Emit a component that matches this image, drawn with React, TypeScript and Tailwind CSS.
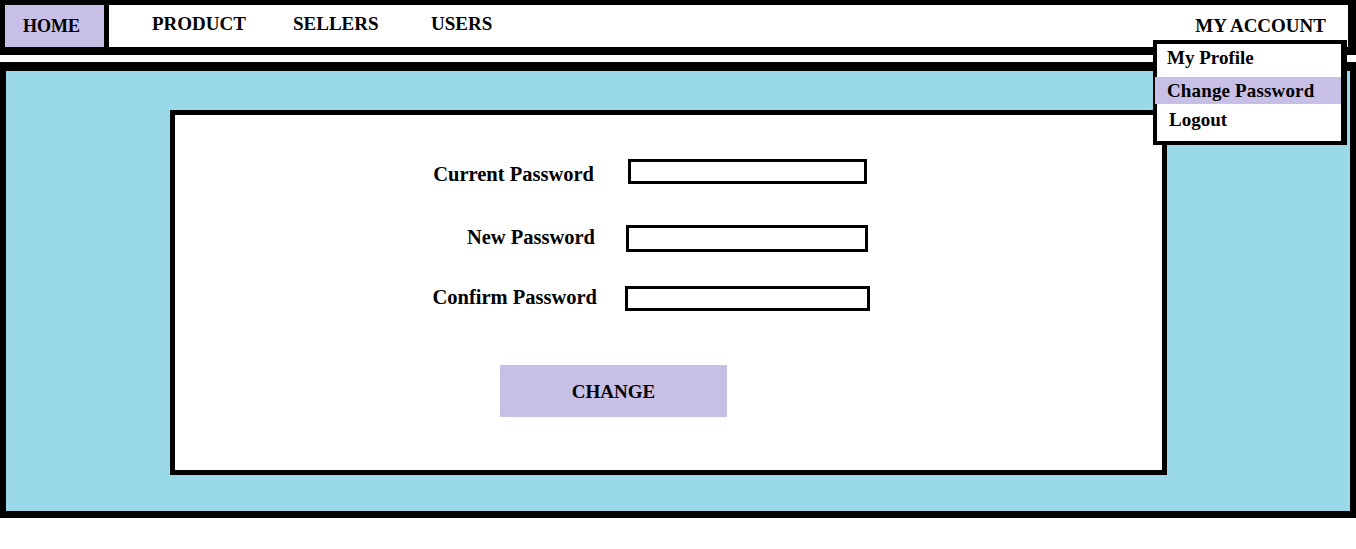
import React from 'react';

const serif = { fontFamily: '"Liberation Serif", "Times New Roman", serif' };

const NavBar: React.FC = () => (
  <div className="flex h-[55px] border-t-[5px] border-l-[5px] border-b-[8px] border-r-[8px] border-black bg-white">
    <div className="w-[104px] h-full shrink-0 bg-[#c8bfe7] border-r-[5px] border-black pl-[18px] pt-[12px] text-[18px] leading-none">
      HOME
    </div>
    <div className="flex flex-1 pt-[9px] text-[19px] leading-none">
      <span className="ml-[43px] w-[141px]">PRODUCT</span>
      <span className="w-[138px]">SELLERS</span>
      <span>USERS</span>
    </div>
    <div className="pt-[11px] pr-[22px] text-[19px] leading-none">MY ACCOUNT</div>
  </div>
);

const AccountMenu: React.FC = () => (
  <div className="absolute right-[9px] top-[40px] w-[194px] h-[105px] bg-white border-[4px] border-r-[6px] border-black text-[19px] leading-none">
    <div className="h-[33px] pl-[10px] pt-[4px]">My Profile</div>
    <div className="h-[27px] -ml-[2px] pl-[12px] pt-[4px] bg-[#c8bfe7] tracking-[0.15px]">Change Password</div>
    <div className="h-[38px] pl-[12px] pt-[6px]">Logout</div>
  </div>
);

const Field: React.FC<{ label: string; className: string; labelClass: string }> = ({ label, className, labelClass }) => (
  <div className="flex items-center">
    <label className={`text-right text-[20.5px] leading-none ${labelClass}`}>{label}</label>
    <input type="password" className={`border-[3px] border-black bg-white outline-none ${className}`} />
  </div>
);

export default function App() {
  return (
    <div className="relative w-[1356px] h-[549px] bg-white font-bold text-black" style={serif}>
      <NavBar />
      <div className="mt-[7px] h-[456px] border-t-[9px] border-b-[7px] border-x-[6px] border-black bg-[#99d9ea]">
        <div className="ml-[164px] mt-[39px] w-[997px] h-[365px] border-[5px] border-black bg-white">
          <div className="pt-[44px]">
            <Field label="Current Password" labelClass="w-[419px] pt-[5px] -mb-[1px]" className="ml-[34px] w-[239px] h-[25px]" />
          </div>
          <div className="pt-[41px]">
            <Field label="New Password" labelClass="w-[420px] pb-[2px]" className="ml-[31px] w-[242px] h-[27px]" />
          </div>
          <div className="pt-[34px]">
            <Field label="Confirm Password" labelClass="w-[422px] pb-[2px]" className="ml-[28px] w-[245px] h-[25px]" />
          </div>
          <button className="mt-[54px] ml-[325px] w-[227px] h-[52px] bg-[#c8bfe7] text-[19px] leading-none">
            CHANGE
          </button>
        </div>
      </div>
      <AccountMenu />
    </div>
  );
}
